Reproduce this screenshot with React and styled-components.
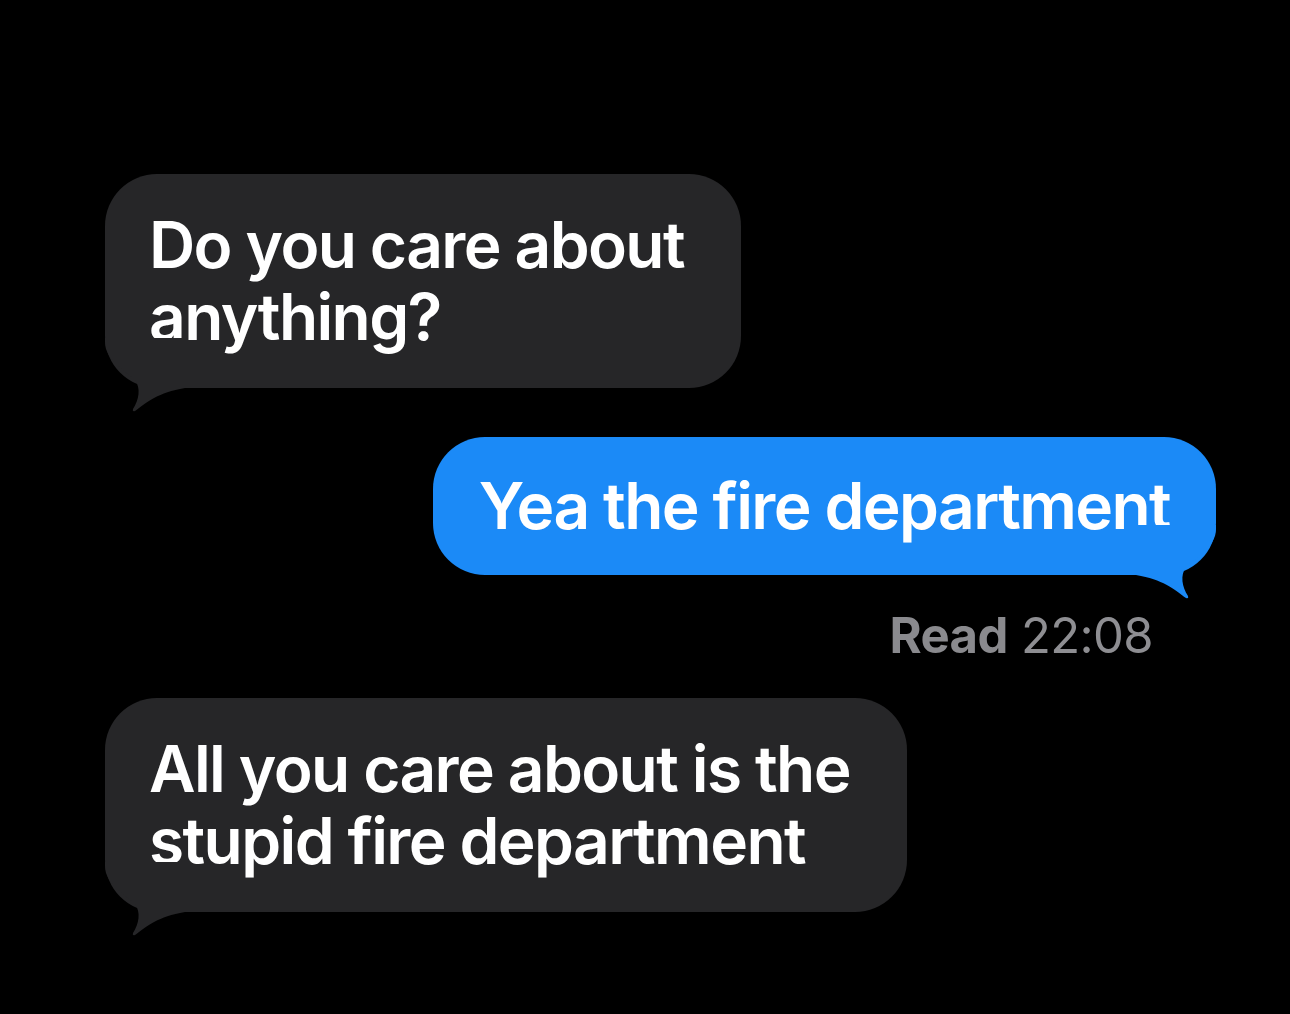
import React from 'react';
import styled, { createGlobalStyle } from 'styled-components';

const GlobalStyle = createGlobalStyle`
  html, body {
    margin: 0;
    padding: 0;
    background: #000;
  }
  body {
    font-family: Inter, "Noto Sans", "Liberation Sans", sans-serif;
  }
`;

const Thread = styled.div`
  width: 1290px;
  height: 1014px;
  box-sizing: border-box;
  padding: 174px 74px 0 105px;
  display: flex;
  flex-direction: column;
  background: #000;
  overflow: hidden;
`;

const Bubble = styled.div`
  position: relative;
  align-self: ${(props) => (props.isMine ? 'flex-end' : 'flex-start')};
  background: ${(props) => (props.isMine ? '#1b8af7' : '#262628')};
  color: #fff;
  font-size: 64px;
  font-weight: 600;
  line-height: 72px;
  letter-spacing: -1.6px;
  border-radius: 52px;
  padding: ${(props) => (props.isMine ? '33px 46px' : '35px 57px 35px 44px')};
  margin-bottom: ${(props) => props.gap}px;
  white-space: nowrap;
`;

const Tail = styled.svg`
  position: absolute;
  bottom: -24px;
  width: 80px;
  height: 74px;
  ${(props) => (props.isMine ? 'right: 0; transform: scaleX(-1);' : 'left: 0;')}
`;

const ReadLabel = styled.div`
  align-self: flex-end;
  margin: 33px 63px 34px 0;
  color: #8e8e92;
  font-size: 49px;
  line-height: 56px;
  letter-spacing: -0.6px;
`;

const ReadWord = styled.span`
  font-weight: 700;
  color: #8a8a8e;
`;

const TimeText = styled.span`
  font-weight: 400;
`;

const messages = [
  { id: 1, isMine: false, lines: ['Do you care about', 'anything?'], gap: 49 },
  { id: 2, isMine: true, lines: ['Yea the fire department'], gap: 0, read: '22:08' },
  { id: 3, isMine: false, lines: ['All you care about is the', 'stupid fire department'], gap: 0 },
];

const BubbleTail = ({ isMine }) => (
  <Tail isMine={isMine} viewBox="0 0 80 74">
    <path
      d="M0 0 L0 4 C0 22 20 32 30 42 C36 50 34 62 28 71 Q27 74 30 73 C40 66 50 56 75 51 L80 50 L80 0 Z"
      fill={isMine ? '#1b8af7' : '#262628'}
    />
  </Tail>
);

const App = () => (
  <>
    <GlobalStyle />
    <Thread>
      {messages.map((msg) => (
        <React.Fragment key={msg.id}>
          <Bubble isMine={msg.isMine} gap={msg.gap}>
            {msg.lines.map((line, i) => (
              <React.Fragment key={i}>
                {i > 0 && <br />}
                {line}
              </React.Fragment>
            ))}
            <BubbleTail isMine={msg.isMine} />
          </Bubble>
          {msg.read && (
            <ReadLabel>
              <ReadWord>Read</ReadWord> <TimeText>{msg.read}</TimeText>
            </ReadLabel>
          )}
        </React.Fragment>
      ))}
    </Thread>
  </>
);

export default App;
